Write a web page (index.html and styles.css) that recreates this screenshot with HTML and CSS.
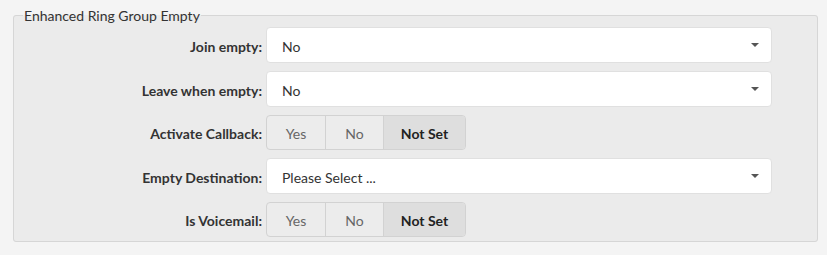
FILE: index.html
```html
<!DOCTYPE html>
<html>
<head>
<meta charset="utf-8">
<link rel="stylesheet" href="styles.css">
</head>
<body>
<div class="page">
  <fieldset class="group">
    <legend class="group-title">Enhanced Ring Group Empty</legend>
    <div class="form-grid">
      <label class="field-label">Join empty:</label>
      <div class="select"><span class="select-value">No</span><span class="caret"></span></div>

      <label class="field-label">Leave when empty:</label>
      <div class="select"><span class="select-value">No</span><span class="caret"></span></div>

      <label class="field-label">Activate Callback:</label>
      <div class="btn-group">
        <span class="btn btn-yes">Yes</span>
        <span class="btn btn-no">No</span>
        <span class="btn btn-notset active">Not Set</span>
      </div>

      <label class="field-label">Empty Destination:</label>
      <div class="select"><span class="select-value">Please Select ...</span><span class="caret"></span></div>

      <label class="field-label">Is Voicemail:</label>
      <div class="btn-group">
        <span class="btn btn-yes">Yes</span>
        <span class="btn btn-no">No</span>
        <span class="btn btn-notset active">Not Set</span>
      </div>
    </div>
  </fieldset>
</div>
</body>
</html>
```
FILE: styles.css
```css
html, body {
  margin: 0;
  padding: 0;
  background: #f4f4f4;
}
body {
  font-family: Lato, "Open Sans", sans-serif;
  font-size: 14px;
  color: #333;
}
.page {
  padding: 7px 9px 0 13px;
}
.group {
  margin: 0;
  padding: 3px 0 4px 0;
  border: 1px solid #d6d6d6;
  border-radius: 3px;
  background: #ebebeb;
}
.group-title {
  margin-left: 9px;
  padding: 0 1px;
  font-size: 14px;
  line-height: 17px;
  color: #333;
}
.form-grid {
  display: grid;
  grid-template-columns: 248px 506px;
  column-gap: 4px;
  row-gap: 8px;
  align-items: center;
}
.field-label {
  text-align: right;
  font-weight: 700;
  color: #333;
  padding-top: 2px;
}
.select {
  height: 36px;
  box-sizing: border-box;
  background: #fff;
  border: 1px solid #e0e0e0;
  border-radius: 4px;
  display: flex;
  align-items: center;
  justify-content: space-between;
  padding: 3px 12px 0 15px;
}
.select-value {
  color: #333;
}
.caret {
  width: 0;
  height: 0;
  margin-top: -3px;
  border-left: 4px solid transparent;
  border-right: 4px solid transparent;
  border-top: 4px solid #555;
}
.btn-group {
  display: flex;
  width: 200px;
  height: 35px;
  box-sizing: border-box;
  border: 1px solid #d2d2d2;
  border-radius: 4px;
  overflow: hidden;
  background: #ececec;
}
.btn {
  display: flex;
  align-items: center;
  justify-content: center;
  color: #666;
  border-right: 1px solid #d2d2d2;
  padding-top: 1px;
}
.btn-yes { width: 58px; }
.btn-no { width: 57px; }
.btn-notset { flex: 1; border-right: 0; }
.btn.active {
  background: #dedede;
  color: #222;
  font-weight: 700;
}
```
